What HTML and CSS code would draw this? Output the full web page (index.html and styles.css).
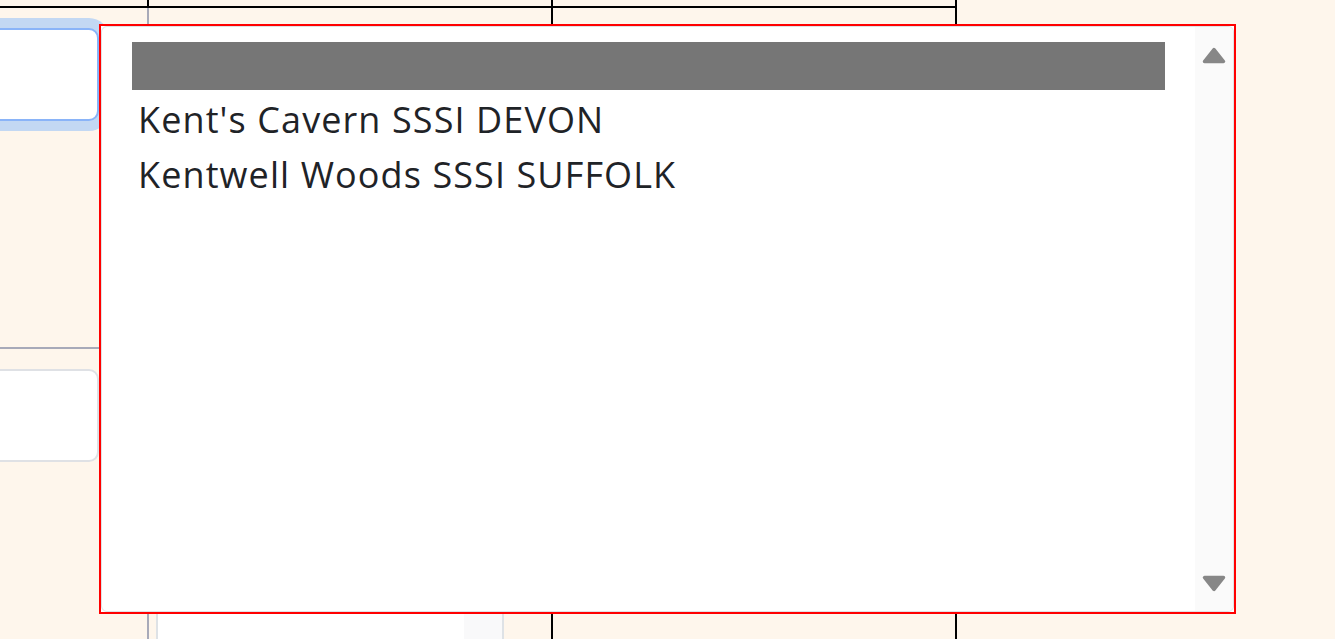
FILE: index.html
```html
<!DOCTYPE html>
<html lang="en">
<head>
<meta charset="utf-8">
<title>SSSI picker</title>
<link rel="stylesheet" href="styles.css">
</head>
<body>
<div class="sheet">
  <div class="row top">
    <div class="cell c1"></div>
    <div class="cell c2"></div>
    <div class="cell c3"></div>
  </div>
  <div class="row main">
    <div class="cell c1">
      <div class="field focused"></div>
      <div class="rule"></div>
      <div class="field"></div>
    </div>
    <div class="cell c2">
      <div class="listbox">
        <div class="listbox-body"></div>
        <div class="listbox-track"></div>
      </div>
    </div>
    <div class="cell c3"></div>
  </div>
</div>

<div class="popup">
  <div class="select">
    <ul class="options">
      <li class="option selected"></li>
      <li class="option">Kent's Cavern SSSI DEVON</li>
      <li class="option">Kentwell Woods SSSI SUFFOLK</li>
    </ul>
    <div class="scrollbar">
      <svg class="arrow" width="24" height="18" viewBox="0 0 24 18"><path d="M12 2.5 L21.5 14.5 L2.5 14.5 Z" fill="#878787" stroke="#878787" stroke-width="3.5" stroke-linejoin="round"/></svg>
      <svg class="arrow" width="24" height="18" viewBox="0 0 24 18"><path d="M2.5 3.5 L21.5 3.5 L12 15.5 Z" fill="#878787" stroke="#878787" stroke-width="3.5" stroke-linejoin="round"/></svg>
    </div>
  </div>
</div>
</body>
</html>
```
FILE: styles.css
```css
html, body {
  margin: 0;
  padding: 0;
}
body {
  background: #fef6ec;
  width: 1335px;
  height: 639px;
  overflow: hidden;
  position: relative;
  font-family: "Open Sans", "Noto Sans", sans-serif;
  color: #1f2327;
}
.sheet {
  width: 957px;
  display: flex;
  flex-direction: column;
  height: 639px;
}
.row {
  display: flex;
}
.row.top {
  height: 6px;
  border-bottom: 2px solid #000;
}
.row.main {
  flex: 1;
  min-height: 0;
}
.cell {
  box-sizing: content-box;
  border-right: 2px solid #000;
}
.c1 { width: 147px; }
.c2 { width: 402px; }
.c3 { width: 402px; }
.main .c1 {
  border-right-color: #a8aab9;
  overflow: hidden;
  padding-top: 20px;
}
.field {
  box-sizing: border-box;
  width: 139px;
  height: 93px;
  margin-left: -40px;
  background: #fff;
  border: 2px solid #dfe1e5;
  border-radius: 10px;
}
.field.focused {
  border-color: #8ab4f8;
  box-shadow: 0 0 0 10px #c3d8f3;
}
.rule {
  height: 2px;
  background: #a8aab9;
  margin: 226px 0 20px;
}
.main .c2 {
  padding-left: 7px;
  box-sizing: border-box;
  width: 404px;
  overflow: hidden;
}
.listbox {
  margin-top: 572px;
  width: 348px;
  height: 200px;
  box-sizing: border-box;
  border: 2px solid #dee2e6;
  border-radius: 8px;
  background: #fff;
  display: flex;
}
.listbox-body { flex: 1; }
.listbox-track {
  width: 38px;
  background: #f9f9fa;
}
.popup {
  position: absolute;
  left: 99px;
  top: 24px;
  width: 1137px;
  height: 590px;
  box-sizing: border-box;
  border: 2px solid #ff0000;
  background: #fff;
}
.select {
  height: 100%;
  box-sizing: border-box;
  border: 1px solid #dee2e6;
  border-radius: 6px;
  display: flex;
  overflow: hidden;
}
.options {
  flex: 1;
  list-style: none;
  margin: 0;
  padding: 15px 30px 0 30px;
}
.option {
  height: 53px;
  padding-top: 2px;
  line-height: 55px;
  padding-left: 6px;
  font-size: 36px;
  letter-spacing: 1.1px;
  white-space: nowrap;
}
.option.selected {
  height: 48px;
  padding-top: 0;
  background: #767676;
}
.scrollbar {
  width: 38px;
  background: #fafafa;
  display: flex;
  flex-direction: column;
  align-items: center;
  justify-content: space-between;
  padding: 20px 0 19px;
  box-sizing: border-box;
}
.arrow { display: block; }
```
